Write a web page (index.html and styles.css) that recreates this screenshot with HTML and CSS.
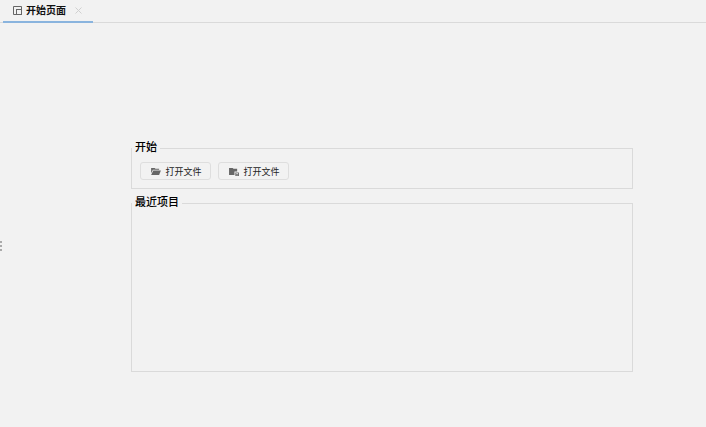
FILE: index.html
```html
<!DOCTYPE html>
<html lang="zh-CN">
<head>
    <meta charset="UTF-8">
    <title>开始页面</title>
    <link rel="stylesheet" href="styles.css">
</head>
<body>
    <div class="tabbar">
        <div class="tab">
            <svg class="tab-icon" width="9" height="9" viewBox="0 0 9 9" fill="none" stroke="#666" stroke-width="1">
                <path d="M8.500 3V.5H.5v8H3"/>
                <rect x="3.500" y="3.500" width="5" height="5"/>
            </svg>
            <span class="tab-title">开始页面</span>
            <svg class="tab-close" width="7" height="7" viewBox="0 0 7 7" stroke="#d0d0d0" stroke-width="1">
                <path d="M.5.5l6 6M6.500.5l-6 6"/>
            </svg>
        </div>
    </div>

    <div class="grip"></div>

    <div class="content">
        <fieldset class="group group-start">
            <legend>开始</legend>
            <div class="actions">
                <button class="btn">
                    <svg width="10" height="8" viewBox="0 0 11 9" fill="#666">
                        <path d="M0 1h4l1 1h4v1H2L0 7z"/>
                        <path d="M2.500 3.800H11L9 9H0z"/>
                    </svg>
                    打开文件
                </button>
                <button class="btn">
                    <svg width="10" height="9" viewBox="0 0 11 10" fill="#666">
                        <path d="M0 1h4l1 1h4v3H6v4H0z"/>
                        <path d="M7 6h4v4H7zM8 7v.7h2V7zM8 8.500v.7h2v-.7z" fill-rule="evenodd"/>
                    </svg>
                    打开文件
                </button>
            </div>
        </fieldset>
        <fieldset class="group group-recent">
            <legend>最近项目</legend>
        </fieldset>
    </div>
</body>
</html>
```

FILE: styles.css
```css
* {
    box-sizing: border-box;
}
body {
    margin: 0;
    height: 100vh;
    overflow: hidden;
    background: #f2f2f2;
    color: #000;
    font-family: "Noto Sans CJK SC", "Liberation Sans", sans-serif;
}
.tabbar {
    display: flex;
    height: 23px;
    padding-left: 3px;
    border-bottom: 1px solid #dadada;
}
.tab {
    display: flex;
    align-items: center;
    width: 90px;
    height: 23px;
    padding: 0 0 0 10px;
    border-bottom: 2px solid #8ab4de;
}
.tab-title {
    margin: -3px 0 0 4px;
    font-size: 10px;
    font-weight: 700;
    color: #111;
}
.tab-close {
    margin-left: 9px;
}
.grip {
    position: absolute;
    left: 0;
    top: 241px;
    width: 2px;
    height: 10px;
    background: repeating-linear-gradient(#aaa 0 2px, transparent 2px 4px);
}
.content {
    display: flex;
    flex-direction: column;
    gap: 4px;
    width: 502px;
    margin: 115px 0 0 131px;
}
.group {
    margin: 0;
    padding: 0 0 0 8px;
    border: 1px solid #dadada;
}
.group legend {
    padding: 0 3px 4px 3px;
    margin-left: -8px;
    font-size: 11px;
    line-height: 16px;
    font-weight: 500;
}
.group-start {
    height: 51px;
}
.group-recent {
    height: 179px;
}
.actions {
    display: flex;
    gap: 7px;
    padding-top: 4px;
}
.btn {
    display: flex;
    align-items: center;
    justify-content: center;
    gap: 4px;
    width: 71px;
    height: 18px;
    padding: 0 0 0 2px;
    border: 1px solid #dedede;
    border-radius: 3px;
    background: #f2f2f2;
    color: #222;
    font-family: inherit;
    font-size: 9px;
}
```
